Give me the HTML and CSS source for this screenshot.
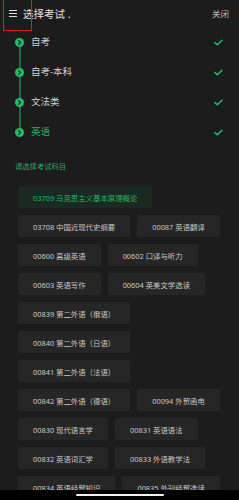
FILE: index.html
```html
<!DOCTYPE html>
<html lang="zh">
<head>
<meta charset="utf-8">
<title>选择考试</title>
<link rel="stylesheet" href="styles.css">
</head>
<body>
<div class="page">
  <header class="header">
    <span class="menu" aria-label="菜单"><i></i><i></i><i></i></span>
    <span class="title">选择考试 .</span>
    <span class="close">关闭</span>
    <span class="highlight"></span>
  </header>

  <ul class="steps">
    <li class="step"><span class="dot"><svg viewBox="0 0 9 9"><path d="M3.6 2.6 L5.5 4.5 L3.6 6.4" /></svg></span><span class="label">自考</span><svg class="check" viewBox="0 0 9 7"><path d="M1 3.6 L3.4 5.8 L8 1.2" /></svg></li>
    <li class="step"><span class="dot"><svg viewBox="0 0 9 9"><path d="M3.6 2.6 L5.5 4.5 L3.6 6.4" /></svg></span><span class="label">自考-本科</span><svg class="check" viewBox="0 0 9 7"><path d="M1 3.6 L3.4 5.8 L8 1.2" /></svg></li>
    <li class="step"><span class="dot"><svg viewBox="0 0 9 9"><path d="M3.6 2.6 L5.5 4.5 L3.6 6.4" /></svg></span><span class="label">文法类</span><svg class="check" viewBox="0 0 9 7"><path d="M1 3.6 L3.4 5.8 L8 1.2" /></svg></li>
    <li class="step active"><span class="dot"><svg viewBox="0 0 9 9"><path d="M3.6 2.6 L5.5 4.5 L3.6 6.4" /></svg></span><span class="label">英语</span><svg class="check" viewBox="0 0 9 7"><path d="M1 3.6 L3.4 5.8 L8 1.2" /></svg></li>
  </ul>

  <div class="section-label">请选择考试科目</div>

  <div class="chips">
    <span class="chip selected">03709 马克思主义基本原理概论</span>
    <span class="chip">03708 中国近现代史纲要</span>
    <span class="chip">00087 英语翻译</span>
    <span class="chip">00600 高级英语</span>
    <span class="chip">00602 口译与听力</span>
    <span class="chip">00603 英语写作</span>
    <span class="chip">00604 英美文学选读</span>
    <span class="chip">00839 第二外语（俄语）</span>
    <span class="chip">00840 第二外语（日语）</span>
    <span class="chip">00841 第二外语（法语）</span>
    <span class="chip">00842 第二外语（德语）</span>
    <span class="chip">00094 外贸函电</span>
    <span class="chip">00830 现代语言学</span>
    <span class="chip">00831 英语语法</span>
    <span class="chip">00832 英语词汇学</span>
    <span class="chip">00833 外语教学法</span>
    <span class="chip">00834 英语经贸知识</span>
    <span class="chip">00835 外刊经贸选读</span>
  </div>
</div>
<div class="home-bar"><span></span></div>
</body>
</html>
```
FILE: styles.css
```css
* { box-sizing: border-box; margin: 0; padding: 0; }
html, body {
  width: 239px;
  height: 500px;
  overflow: hidden;
  background: #1c1c1c;
}
body {
  font-family: "Noto Sans", "Noto Sans CJK SC", sans-serif;
  color: #d0d0d0;
  position: relative;
}
.page { height: 490px; overflow: hidden; }

.header {
  position: relative;
  height: 27px;
  display: flex;
  align-items: center;
  padding: 0 10px 0 9px;
}
.menu {
  width: 8px;
  height: 8px;
  display: flex;
  flex-direction: column;
  justify-content: space-between;
  margin-right: 6px;
}
.menu i {
  display: block;
  height: 1.3px;
  background: #dedede;
}
.title {
  flex: 1;
  font-size: 10.5px;
  line-height: 14px;
  color: #e4e4e4;
}
.close {
  font-size: 8.5px;
  line-height: 12px;
  color: #bdbdbd;
}
.highlight {
  position: absolute;
  left: 3px;
  top: -2px;
  width: 29px;
  height: 33px;
  border: 1px solid #e01b1b;
}

.steps {
  list-style: none;
  position: relative;
  padding: 0 16px 0 15px;
}
.steps::before {
  content: "";
  position: absolute;
  left: 19px;
  top: 15px;
  height: 90px;
  width: 2px;
  background: #1d6a40;
}
.step {
  height: 30px;
  display: flex;
  align-items: center;
  position: relative;
}
.dot {
  width: 9px;
  height: 9px;
  border-radius: 50%;
  background: #1fbe68;
  display: flex;
  margin-right: 7px;
  position: relative;
}
.dot svg { width: 9px; height: 9px; }
.dot path {
  fill: none;
  stroke: #0b2c19;
  stroke-width: 1.3;
  stroke-linecap: round;
  stroke-linejoin: round;
}
.label {
  flex: 1;
  font-size: 9.5px;
  line-height: 12px;
  color: #cfcfcf;
}
.step.active .label { color: #22b565; }
.check {
  width: 9px;
  height: 7px;
}
.check path {
  fill: none;
  stroke: #1fc06b;
  stroke-width: 1.5;
  stroke-linecap: round;
  stroke-linejoin: round;
}

.section-label {
  margin: 13px 0 0 15px;
  font-size: 7.3px;
  line-height: 12px;
  color: #1fae62;
}

.chips {
  margin-top: 14px;
  padding: 0 15px 0 18px;
  display: flex;
  flex-wrap: wrap;
  gap: 7px 7px;
}
.chip {
  height: 22px;
  display: flex;
  align-items: center;
  padding: 0 15px;
  background: #262626;
  border-radius: 2px;
  font-size: 7.4px;
  color: #c9c9c9;
  white-space: nowrap;
}
.chip.selected {
  background: #1b2a21;
  color: #22b868;
}

.home-bar {
  position: absolute;
  left: 0;
  right: 0;
  bottom: 0;
  height: 10px;
  background: #000;
  display: flex;
  justify-content: center;
  padding-top: 4px;
}
.home-bar span {
  width: 88px;
  height: 1.5px;
  background: #f2f2f2;
  border-radius: 1px;
}
```
